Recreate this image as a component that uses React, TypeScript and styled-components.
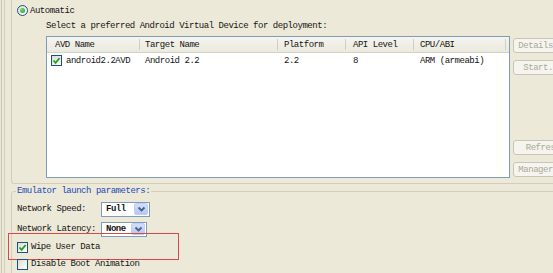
import styled, { createGlobalStyle } from "styled-components";

const GlobalStyle = createGlobalStyle`
  html, body {
    margin: 0;
    padding: 0;
    background: #ece9d8;
    overflow: hidden;
  }
  body {
    font-family: "Liberation Mono", "DejaVu Sans Mono", monospace;
    font-size: 9px;
    letter-spacing: -0.47px;
    color: #151515;
  }
  * {
    box-sizing: border-box;
  }
`;

const Screen = styled.div`
  width: 553px;
  height: 273px;
  overflow: hidden;
  display: flex;
  padding-left: 1px;
`;

const OuterEdge = styled.div`
  flex: 1;
  display: flex;
  border-left: 1px solid #c7c4b2;
  padding-left: 2px;
`;

const InnerEdge = styled.div`
  flex: 1;
  display: flex;
  flex-direction: column;
  border-left: 1px solid #d3d0bf;
  padding-left: 6px;
`;

const TargetGroup = styled.div`
  width: 620px;
  height: 184px;
  flex-shrink: 0;
  display: flex;
  flex-direction: column;
  border: 1px solid #d0cebd;
  border-top: none;
  border-radius: 0 0 3px 3px;
  padding-left: 5px;
`;

const RadioRow = styled.div`
  display: flex;
  align-items: center;
  gap: 2px;
  height: 13px;
  margin-top: 4px;
`;

const Radio = styled.span`
  width: 11px;
  height: 11px;
  border-radius: 50%;
  border: 1px solid #1c5180;
  background: linear-gradient(135deg, #dcdcd4, #ffffff);
  display: flex;
  align-items: center;
  justify-content: center;

  &::before {
    content: "";
    width: 5px;
    height: 5px;
    border-radius: 50%;
    background: radial-gradient(circle at 35% 35%, #6fdc6f, #21a121);
  }
`;

const Hint = styled.div`
  margin: 4px 0 0 29px;
  height: 10px;
  line-height: 10px;
`;

const ListRow = styled.div`
  display: flex;
  gap: 3px;
  margin: 5px 0 0 29px;
`;

const ListBox = styled.div`
  width: 464px;
  height: 142px;
  flex-shrink: 0;
  border: 1px solid #7f9db9;
  background: #ffffff;
  display: flex;
  flex-direction: column;
`;

const COLS = "93px 138px 68px 68px 92px 1fr";

const HeaderRow = styled.div`
  display: grid;
  grid-template-columns: ${COLS};
  height: 16px;
  background: linear-gradient(#f5f4ee, #ebeadf);
  border-bottom: 1px solid #d5d2c2;
`;

const HeaderCell = styled.div<{ $pad: number; $last?: boolean }>`
  display: flex;
  align-items: center;
  padding-left: ${(p) => p.$pad}px;
  white-space: nowrap;
  background: ${(p) =>
    p.$last
      ? "none"
      : "linear-gradient(#d2cfc0, #d2cfc0) right center / 1px 11px no-repeat"};
`;

const DataRow = styled.div`
  display: grid;
  grid-template-columns: ${COLS};
  height: 15px;
`;

const DataCell = styled.div<{ $pad: number }>`
  display: flex;
  align-items: center;
  gap: 4px;
  padding-left: ${(p) => p.$pad}px;
  white-space: nowrap;
`;

const Check = styled.span`
  width: 11px;
  height: 11px;
  flex-shrink: 0;
  border: 1px solid #1c5180;
  background: linear-gradient(135deg, #dcdcd4, #ffffff);
  display: flex;
  align-items: center;
  justify-content: center;
`;

const ButtonStack = styled.div`
  width: 60px;
  height: 142px;
  flex-shrink: 0;
  display: flex;
  flex-direction: column;
  justify-content: space-between;
  padding: 2px 0 1px;
`;

const ButtonGroup = styled.div`
  display: flex;
  flex-direction: column;
  gap: 7px;
`;

const DisabledButton = styled.div`
  height: 15px;
  border: 1px solid #c9c6b6;
  border-radius: 3px;
  background: #f5f4ef;
  color: #aca899;
  display: flex;
  align-items: center;
  justify-content: center;
  white-space: nowrap;
`;

const Params = styled.fieldset`
  width: 620px;
  flex-shrink: 0;
  margin: 2px 0 0;
  padding: 0 0 20px 5px;
  min-width: 0;
  border: 1px solid #d0cebd;
  border-radius: 3px;
  display: flex;
  flex-direction: column;
`;

const Legend = styled.legend`
  padding: 0 1px;
  margin-left: -1px;
  height: 10px;
  line-height: 10px;
  color: #1d4bb5;
`;

const FieldRow = styled.div<{ $top: number }>`
  display: flex;
  align-items: center;
  height: 16px;
  margin-top: ${(p) => p.$top}px;
`;

const FieldLabel = styled.span`
  width: 84px;
  white-space: nowrap;
`;

const Combo = styled.div<{ $width: number }>`
  width: ${(p) => p.$width}px;
  height: 15px;
  border: 1px solid #7f9db9;
  background: #ffffff;
  display: flex;
  align-items: center;
  padding: 1px;
`;

const ComboText = styled.span`
  flex: 1;
  padding-left: 3px;
  font-weight: bold;
`;

const ComboArrow = styled.span`
  width: 14px;
  height: 12px;
  border-radius: 2px;
  background: linear-gradient(#d3defb, #b4c7f5);
  border: 1px solid #c0cff4;
  display: flex;
  align-items: center;
  justify-content: center;
`;

const CheckRow = styled.div<{ $top: number; $marked?: boolean }>`
  position: relative;
  display: flex;
  align-items: center;
  gap: 3px;
  height: 14px;
  margin-top: ${(p) => p.$top}px;

  &::after {
    content: "";
    display: ${(p) => (p.$marked ? "block" : "none")};
    position: absolute;
    left: -9px;
    top: -7px;
    width: 169px;
    height: 25px;
    border: 1px solid #d84848;
  }
`;

const CheckMark = () => (
  <svg width="9" height="9" viewBox="0 0 9 9">
    <path d="M1.5 4.5 L3.6 6.8 L7.6 2" fill="none" stroke="#21a121" strokeWidth="1.8" />
  </svg>
);

const Chevron = () => (
  <svg width="9" height="7" viewBox="0 0 9 7">
    <path d="M1.5 1.5 L4.5 4.5 L7.5 1.5" fill="none" stroke="#4d6185" strokeWidth="1.8" />
  </svg>
);

const headers = [
  { label: "AVD Name", pad: 8 },
  { label: "Target Name", pad: 5 },
  { label: "Platform", pad: 6 },
  { label: "API Level", pad: 7 },
  { label: "CPU/ABI", pad: 6 },
];

export default function App() {
  return (
    <>
      <GlobalStyle />
      <Screen>
        <OuterEdge>
          <InnerEdge>
            <TargetGroup>
              <RadioRow>
                <Radio />
                <span>Automatic</span>
              </RadioRow>
              <Hint>Select a preferred Android Virtual Device for deployment:</Hint>
              <ListRow>
                <ListBox>
                  <HeaderRow>
                    {headers.map((h) => (
                      <HeaderCell key={h.label} $pad={h.pad}>
                        {h.label}
                      </HeaderCell>
                    ))}
                    <HeaderCell $pad={0} $last />
                  </HeaderRow>
                  <DataRow>
                    <DataCell $pad={4}>
                      <Check>
                        <CheckMark />
                      </Check>
                      android2.2AVD
                    </DataCell>
                    <DataCell $pad={5}>Android 2.2</DataCell>
                    <DataCell $pad={6}>2.2</DataCell>
                    <DataCell $pad={7}>8</DataCell>
                    <DataCell $pad={6}>ARM (armeabi)</DataCell>
                  </DataRow>
                </ListBox>
                <ButtonStack>
                  <ButtonGroup>
                    <DisabledButton>Details...</DisabledButton>
                    <DisabledButton>Start...</DisabledButton>
                  </ButtonGroup>
                  <ButtonGroup>
                    <DisabledButton>Refresh</DisabledButton>
                    <DisabledButton>Manager...</DisabledButton>
                  </ButtonGroup>
                </ButtonStack>
              </ListRow>
            </TargetGroup>

            <Params>
              <Legend>Emulator launch parameters:</Legend>
              <FieldRow $top={5}>
                <FieldLabel>Network Speed:</FieldLabel>
                <Combo $width={49}>
                  <ComboText>Full</ComboText>
                  <ComboArrow>
                    <Chevron />
                  </ComboArrow>
                </Combo>
              </FieldRow>
              <FieldRow $top={4}>
                <FieldLabel>Network Latency:</FieldLabel>
                <Combo $width={46}>
                  <ComboText>None</ComboText>
                  <ComboArrow>
                    <Chevron />
                  </ComboArrow>
                </Combo>
              </FieldRow>
              <CheckRow $top={3} $marked>
                <Check>
                  <CheckMark />
                </Check>
                <span>Wipe User Data</span>
              </CheckRow>
              <CheckRow $top={3}>
                <Check />
                <span>Disable Boot Animation</span>
              </CheckRow>
            </Params>
          </InnerEdge>
        </OuterEdge>
      </Screen>
    </>
  );
}
